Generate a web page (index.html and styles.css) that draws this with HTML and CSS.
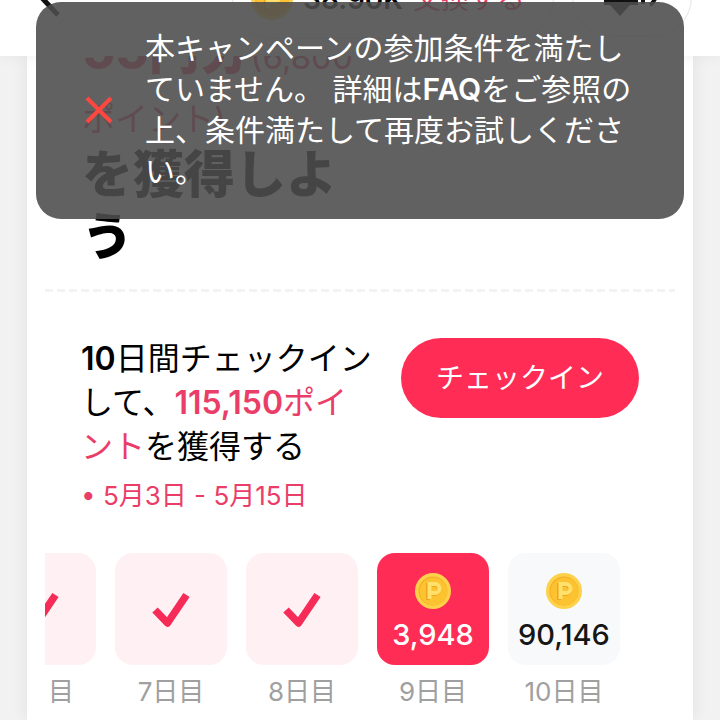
FILE: index.html
```html
<!DOCTYPE html>
<html lang="ja">
<head>
<meta charset="utf-8">
<meta name="viewport" content="width=device-width, initial-scale=1">
<title>チェックイン</title>
<link rel="stylesheet" href="styles.css">
</head>
<body>
<svg class="defs" aria-hidden="true">
  <defs>
    <symbol id="coin" viewBox="0 0 36 36">
      <circle cx="18" cy="18" r="18" fill="#fdd14a"/>
      <circle cx="18" cy="18" r="14.500" fill="#f3b029"/>
      <circle cx="18.500" cy="18.500" r="13.800" fill="#fdc22f"/>
      <path d="M13 27V12h6.500a4.500 4.500 0 0 1 0 9H14" fill="none" stroke="#eea51f" stroke-width="4"/>
      <path d="M14.500 26V11h5.500a4.500 4.500 0 0 1 0 9h-5" fill="none" stroke="#ffe06a" stroke-width="4"/>
    </symbol>
    <symbol id="check" viewBox="0 0 38 36">
      <path d="M3 19 15.500 32 34.500 4" fill="none" stroke="#f72b57" stroke-width="7.500" stroke-linejoin="round"/>
    </symbol>
  </defs>
</svg>

<header class="topbar">
  <button class="back" aria-label="戻る">
    <svg viewBox="0 0 20 36"><path d="M18 2 3 18 18 34" fill="none" stroke="#111" stroke-width="5"/></svg>
  </button>
  <div class="balance">
    <svg class="balance-coin"><use href="#coin"/></svg>
    <span>38.90K</span>
    <a href="#exchange">交換する</a>
  </div>
  <button class="chat" aria-label="ヘルプ">
    <svg viewBox="0 0 60 40"><path d="M2 4H36V28H28L18 39 8 28H2Z" fill="#111"/><path d="M41 27V20M48 28Q54 24 56 12" fill="none" stroke="#111" stroke-width="4"/></svg>
  </button>
</header>

<main class="card">
  <h1 class="title"><em>55円分<small>(6,800<br>ポイント)</small></em><br>を獲得しよ<br>う</h1>
  <section class="checkin">
    <div>
      <h2><b>10</b>日間チェックインして、<em><b>115,150</b>ポイント</em>を獲得する</h2>
      <p class="period">• 5月3日 - 5月15日</p>
    </div>
    <button class="cta">チェックイン</button>
  </section>
  <ol class="days">
    <li><div class="tile"><svg class="check"><use href="#check"/></svg></div>6日目</li>
    <li><div class="tile"><svg class="check"><use href="#check"/></svg></div>7日目</li>
    <li><div class="tile"><svg class="check"><use href="#check"/></svg></div>8日目</li>
    <li><div class="tile reward today"><svg class="coin"><use href="#coin"/></svg>3,948</div>9日目</li>
    <li><div class="tile reward next"><svg class="coin"><use href="#coin"/></svg>90,146</div>10日目</li>
  </ol>
</main>

<div class="toast" role="alert">
  <svg viewBox="0 0 28 28"><path d="M2 2 26 26M26 2 2 26" stroke="#ff4740" stroke-width="4"/></svg>
  <p>本キャンペーンの参加条件を満たしていません。 詳細は<b>FAQ</b>をご参照の上、条件満たして再度お試しください。</p>
</div>
</body>
</html>
```

FILE: styles.css
```css
* { box-sizing: border-box; }

body {
  display: flex;
  flex-direction: column;
  min-height: 100vh;
  margin: 0;
  background: #f2f2f2;
  color: #000;
  font-family: Inter, "Noto Sans CJK JP", sans-serif;
}

h1, h2, p, ol { margin: 0; padding: 0; }
em { font-style: normal; color: #ea3d68; }
b { font-weight: 600; }
button { border: 0; background: none; padding: 0; font: inherit; }
.defs { position: absolute; width: 0; height: 0; }

.topbar {
  position: relative;
  z-index: 1;
  display: flex;
  align-items: flex-end;
  height: 56px;
  padding: 0 28px 39px 40px;
  background: #fff;
  box-shadow: 0 0 16px rgba(0, 0, 0, .06);
}
.back svg { display: block; width: 20px; height: 36px; }
.balance {
  display: flex;
  align-items: center;
  gap: 10px;
  height: 80px;
  margin: 0 18px -22px auto;
  padding: 0 28px 0 18px;
  border: 1px solid #e4e4e4;
  border-radius: 40px;
  font-size: 28px;
  line-height: 36px;
  font-weight: 600;
}
.balance-coin { width: 42px; height: 42px; }
.balance a { color: #ea3d68; font-weight: 400; text-decoration: none; }
.chat {
  display: flex;
  align-items: center;
  justify-content: center;
  height: 80px;
  width: 120px;
  margin-bottom: -20px;
  border: 1px solid #e4e4e4;
  border-radius: 40px;
}
.chat svg { width: 60px; height: 40px; }

.card {
  display: flow-root;
  flex: 1;
  margin: 0 27px;
  padding: 0 18px;
  background: #fff;
  box-shadow: 0 0 16px rgba(0, 0, 0, .08);
}

.title {
  margin-top: -36px;
  padding: 0 37px;
  font-size: 51px;
  line-height: 62px;
  font-weight: 800;
}
.title small { font-size: 33px; line-height: 32px; font-weight: 400; }

.checkin {
  display: grid;
  grid-template-columns: 1fr 238px;
  gap: 24px;
  align-items: start;
  margin-top: 21px;
  padding: 48px 36px 0;
  background: repeating-linear-gradient(90deg, #f3f3f3 0 8px, #fff 8px 12px) 0 0 / 100% 3px no-repeat;
}
.checkin h2 { font-size: 32px; line-height: 44px; font-weight: 400; }
.period { margin-top: 7px; font-size: 26px; line-height: 40px; color: #ea3d68; }
.cta {
  height: 80px;
  margin-top: 1px;
  border-radius: 40px;
  background: #ff2c55;
  color: #fff;
  font-size: 28px;
  line-height: 40px;
}

.days {
  display: flex;
  justify-content: flex-end;
  gap: 19px;
  margin-top: 37px;
  padding-right: 55px;
  overflow: hidden;
  list-style: none;
  color: #a0a0a0;
  font-size: 26px;
  line-height: 54px;
  text-align: center;
}
.days li { flex: 0 0 112px; }
.tile {
  display: flex;
  flex-direction: column;
  align-items: center;
  justify-content: center;
  height: 112px;
  border-radius: 18px;
  background: #fff0f3;
  font-size: 29px;
  line-height: 36px;
  font-weight: 500;
}
.reward { padding-top: 8px; }
.today { background: #ff2c55; color: #fff; }
.next { background: #f8f9fb; color: #161616; }
.check { width: 38px; height: 36px; }
.coin { width: 36px; height: 36px; margin-bottom: 8px; }

.toast {
  position: absolute;
  z-index: 2;
  top: 2px;
  left: 36px;
  right: 36px;
  display: flex;
  align-items: center;
  gap: 32px;
  padding: 26px 44px 27px 49px;
  border-radius: 25px;
  background: rgba(78, 78, 78, .89);
  color: #fff;
  font-size: 30px;
  line-height: 41px;
}
.toast svg { flex: none; width: 28px; height: 28px; }
```
